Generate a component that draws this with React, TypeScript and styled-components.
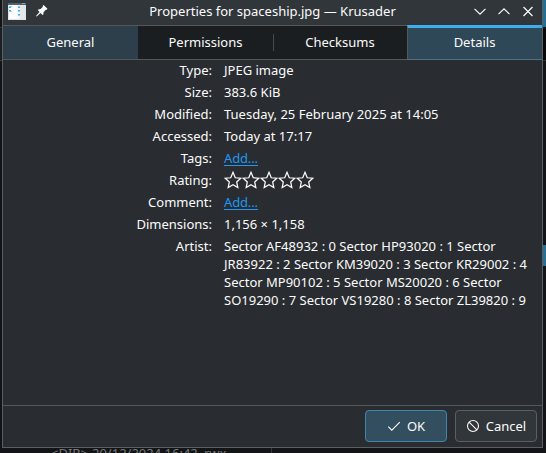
import React from "react";
import styled, { createGlobalStyle } from "styled-components";

const GlobalStyle = createGlobalStyle`
  *, *::before, *::after { box-sizing: border-box; }
  html, body { margin: 0; height: 100%; overflow: hidden; background: #141618; }
  body { font: 13px/18px "Noto Sans", sans-serif; color: #fcfcfc; }
  button { font: inherit; color: inherit; }
`;

const Desktop = styled.div`
  position: relative;
  width: 546px;
  height: 453px;
  overflow: hidden;
  background: #121416;
`;

const Behind = styled.div<{ $x: number; $y: number; $w: number; $h: number; $color: string }>`
  position: absolute;
  left: ${(p) => p.$x}px;
  top: ${(p) => p.$y}px;
  width: ${(p) => p.$w}px;
  height: ${(p) => p.$h}px;
  background: ${(p) => p.$color};
`;

const BehindText = styled.div`
  position: absolute;
  left: 51px;
  top: 444px;
  display: grid;
  grid-template-columns: 41px 112px auto;
  line-height: 18px;
  color: #77797b;
  white-space: pre;
`;

const Dialog = styled.section`
  position: absolute;
  left: 2px;
  top: 0;
  width: 541px;
  height: 448px;
  display: flex;
  flex-direction: column;
  background: #292c30;
  border: 1px solid #5c5f62;
  border-top: 0;
`;

const TitleBar = styled.header`
  height: 25px;
  flex: none;
  display: grid;
  grid-template-columns: 71px 1fr 71px;
  align-items: center;
  background: #31363b;
`;

const TitleIcons = styled.div`
  display: flex;
  align-items: center;
  height: 25px;
  padding: 0 0 3px 5px;
  gap: 10px;
  svg { display: block; }
`;

const Title = styled.h1`
  margin: 0 0 3px;
  font-size: 13px;
  font-weight: 400;
  text-align: center;
  white-space: nowrap;
`;

const WindowControls = styled.div`
  display: flex;
  gap: 6px;
  padding-bottom: 3px;
  svg { display: block; }
`;

const TabBar = styled.nav`
  height: 35px;
  flex: none;
  display: grid;
  grid-template-columns: 135px 135px 134px 135px;
  border-top: 1px solid #54585b;
  border-bottom: 1px solid #54585b;
  background: #1b1e20;
`;

type TabKind = "plain" | "hover" | "active";

const tabBackground: Record<TabKind, string> = {
  plain: "#1b1e20",
  hover: "#2d3f4b",
  active: "#2f4858",
};

const Tab = styled.button<{ $kind: TabKind }>`
  position: relative;
  border: 0;
  padding: 0 0 1px;
  background: ${(p) => tabBackground[p.$kind]};
  ${(p) =>
    p.$kind === "active" &&
    `
    margin: -1px 0 -1px 0;
    border-left: 1px solid #54585b;
    border-top: 3px solid #3daee9;
    border-bottom: 1px solid #56707f;
    padding-bottom: 3px;
    padding-right: 1px;
  `}
  & + &::before {
    content: "";
    display: ${(p) => (p.$kind === "active" ? "none" : "block")};
    position: absolute;
    left: 0;
    top: 8px;
    width: 1px;
    height: 17px;
    background: #484b4e;
  }
`;

const Details = styled.dl`
  flex: 1;
  margin: 0;
  padding: 1px 0 0;
  display: grid;
  grid-template-columns: 209px 308px;
  column-gap: 12px;
  row-gap: 4px;
  align-content: start;
`;

const Label = styled.dt`
  text-align: right;
`;

const Value = styled.dd`
  margin: 0;
  min-height: 18px;
  white-space: nowrap;
`;

const AddLink = styled.a`
  color: #1d99f3;
  text-decoration: none;
  letter-spacing: -0.15px;
  display: inline-block;
  height: 17px;
  border-bottom: 1px solid #1d99f3;
`;

const Stars = styled.div`
  display: flex;
  svg { display: block; }
`;

const Footer = styled.footer`
  height: 42px;
  flex: none;
  display: flex;
  justify-content: flex-end;
  gap: 8px;
  padding: 4px 5px 5px;
  border-top: 1px solid #54585b;
`;

const Button = styled.button<{ $primary?: boolean }>`
  width: 82px;
  height: 32px;
  display: flex;
  align-items: center;
  justify-content: center;
  gap: 5px;
  padding: 0 1px 0 0;
  border-radius: 4px;
  border: 1px solid ${(p) => (p.$primary ? "#4186a9" : "#5b5f63")};
  background: ${(p) => (p.$primary ? "#334e5e" : "#31363a")};
  svg { display: block; }
`;

const AppIcon = () => (
  <svg width="18" height="18" viewBox="0 0 18 18" shapeRendering="crispEdges">
    <rect y="1" width="18" height="17" fill="#dfe3e5" />
    <rect y="1" width="18" height="2" fill="#53616d" />
    <rect x="14" y="1" width="3" height="1" fill="#8aa0ae" />
    <rect x="1" y="3" width="8" height="14" fill="#fcfcfc" />
    <rect x="9" y="3" width="8" height="14" fill="#f3f4f4" />
    <rect x="12" y="3" width="5" height="14" fill="#e4e7e8" />
    <g fill="#3daee9">
      <rect x="1" y="5" width="2" height="1" />
      <rect x="1" y="8" width="2" height="1" />
      <rect x="10" y="5" width="2" height="1" />
      <rect x="10" y="8" width="2" height="1" />
      <rect x="10" y="12" width="2" height="1" />
    </g>
    <g fill="#8fcdf0">
      <rect x="1" y="4" width="3" height="1" />
      <rect x="1" y="9" width="3" height="1" />
      <rect x="10" y="4" width="2" height="1" />
      <rect x="10" y="9" width="2" height="1" />
      <rect x="10" y="13" width="2" height="1" />
    </g>
  </svg>
);

const PinIcon = () => (
  <svg width="12" height="12" viewBox="0 0 12 12" fill="#fcfcfc">
    <path d="M7.6 0 11.5 3.8 10.3 5 9.8 4.8 7.5 7.2 7.4 9.5 6.6 10 4.5 8 .7 11.5 0 11.1 3.5 7 1.8 5.1 2.3 4.4 4.6 4.1 6.9 1.8 6.6 1.1Z" />
  </svg>
);

const ControlIcon = ({ d }: { d: string }) => (
  <svg width="18" height="18" viewBox="0 0 18 18" fill="none" stroke="#fcfcfc" strokeWidth="1.15">
    <path d={d} />
  </svg>
);

const StarIcon = () => (
  <svg width="18" height="18" viewBox="0 0 18 18" fill="none" stroke="#fcfcfc" strokeWidth="1.25">
    <path d="m9 1.3 2.25 5.45 5.5.45-4.05 3.75 1.1 5.65L9 13.7l-4.8 2.9 1.1-5.65L1.25 7.2l5.5-.45Z" />
  </svg>
);

const tabs: { name: string; kind: TabKind }[] = [
  { name: "General", kind: "hover" },
  { name: "Permissions", kind: "plain" },
  { name: "Checksums", kind: "plain" },
  { name: "Details", kind: "active" },
];

const rating = (
  <Stars>
    {[1, 2, 3, 4, 5].map((n) => (
      <StarIcon key={n} />
    ))}
  </Stars>
);

const artist = [
  "Sector AF48932 : 0 Sector HP93020 : 1 Sector",
  "JR83922 : 2 Sector KM39020 : 3 Sector KR29002 : 4",
  "Sector MP90102 : 5 Sector MS20020 : 6 Sector",
  "SO19290 : 7 Sector VS19280 : 8 Sector ZL39820 : 9",
];

const rows: [string, React.ReactNode][] = [
  ["Type:", "JPEG image"],
  ["Size:", "383.6 KiB"],
  ["Modified:", "Tuesday, 25 February 2025 at 14:05"],
  ["Accessed:", "Today at 17:17"],
  ["Tags:", <AddLink>Add...</AddLink>],
  ["Rating:", rating],
  ["Comment:", <AddLink>Add...</AddLink>],
  ["Dimensions:", "1,156 × 1,158"],
  ["Artist:", artist.map((line) => <div key={line}>{line}</div>)],
];

export default function App() {
  return (
    <Desktop>
      <GlobalStyle />
      <Behind $x={0} $y={27} $w={2} $h={1} $color="#3a3d40" />
      <Behind $x={0} $y={29} $w={2} $h={31} $color="#1d2022" />
      <Behind $x={0} $y={60} $w={2} $h={1} $color="#3a3d40" />
      <Behind $x={543} $y={0} $w={3} $h={27} $color="#246f95" />
      <Behind $x={543} $y={29} $w={3} $h={31} $color="#08090a" />
      <Behind $x={543} $y={60} $w={3} $h={1} $color="#303336" />
      <Behind $x={543} $y={245} $w={3} $h={21} $color="#287194" />
      <Behind $x={271} $y={448} $w={1} $h={5} $color="#35383a" />
      <BehindText>
        <span>&lt;DIR&gt;</span>
        <span>20/12/2024 16:42</span>
        <span>rwx</span>
      </BehindText>
      <Dialog>
        <TitleBar>
          <TitleIcons>
            <AppIcon />
            <PinIcon />
          </TitleIcons>
          <Title>Properties for spaceship.jpg — Krusader</Title>
          <WindowControls>
            <ControlIcon d="m3.5 6.8 5.5 5.4 5.5-5.4" />
            <ControlIcon d="m3.5 12.2 5.5-5.4 5.5 5.4" />
            <ControlIcon d="m4.5 5 9 9m0-9-9 9" />
          </WindowControls>
        </TitleBar>
        <TabBar>
          {tabs.map((tab) => (
            <Tab key={tab.name} $kind={tab.kind}>
              {tab.name}
            </Tab>
          ))}
        </TabBar>
        <Details>
          {rows.map(([label, value]) => (
            <React.Fragment key={label}>
              <Label>{label}</Label>
              <Value>{value}</Value>
            </React.Fragment>
          ))}
        </Details>
        <Footer>
          <Button $primary>
            <svg width="16" height="16" viewBox="0 0 16 16" fill="none" stroke="#fcfcfc" strokeWidth="1.1">
              <path d="m2.3 8.6 3.5 3.6 8-8" />
            </svg>
            OK
          </Button>
          <Button>
            <svg width="16" height="16" viewBox="0 0 16 16" fill="none" stroke="#fcfcfc" strokeWidth="1.1">
              <circle cx="8" cy="8" r="5.5" />
              <path d="m4.1 4.1 7.8 7.8" />
            </svg>
            Cancel
          </Button>
        </Footer>
      </Dialog>
    </Desktop>
  );
}
